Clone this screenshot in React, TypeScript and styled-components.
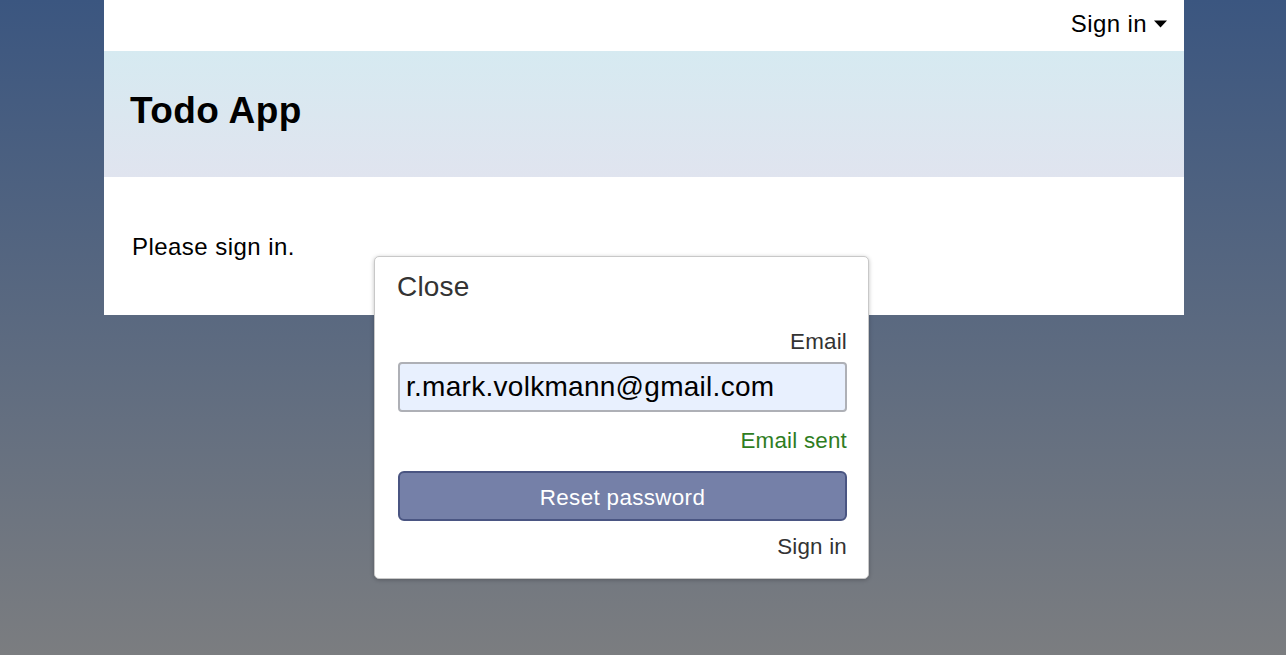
import React from "react";
import styled, { createGlobalStyle } from "styled-components";

const Global = createGlobalStyle`
  html, body { margin: 0; padding: 0; }
  body {
    min-height: 655px;
    background: linear-gradient(to bottom, #3b5680 0%, #7b7d80 100%);
    font-family: "Liberation Sans", Arial, sans-serif;
    color: #000;
  }
  * { box-sizing: border-box; }
`;

const Page = styled.div`
  position: relative;
  min-height: 655px;
`;

const Container = styled.div`
  width: 1080px;
  margin: 0 auto;
  background: #fff;
  transform: translateX(1px);
`;

const TopBar = styled.div`
  height: 51px;
  padding: 10px 17px 0 0;
  display: flex;
  justify-content: flex-end;
  align-items: flex-start;
`;

const MenuToggle = styled.div`
  display: flex;
  align-items: center;
  gap: 7px;
  font-size: 24px;
  line-height: 28px;
  letter-spacing: 0.4px;
`;

const Header = styled.header`
  height: 126px;
  padding: 38px 26px 0;
  background: linear-gradient(to bottom, #d6eaf1 0%, #e0e4ef 100%);
`;

const Title = styled.h1`
  margin: 0;
  font-size: 37px;
  line-height: 44px;
  font-weight: bold;
  letter-spacing: 0.4px;
`;

const Content = styled.main`
  padding: 56px 28px 54px;
  font-size: 24px;
  line-height: 28px;
  letter-spacing: 0.45px;
`;

const Dialog = styled.div`
  position: absolute;
  left: 374px;
  top: 256px;
  width: 495px;
  padding: 14px 21px 18px 22px;
  background: #fff;
  border: 1px solid #c8c8c8;
  border-radius: 5px;
  box-shadow: 0 1px 4px rgba(0, 0, 0, 0.25);
  display: flex;
  flex-direction: column;
  color: #333;
`;

const CloseText = styled.div`
  font-size: 28px;
  line-height: 32px;
  letter-spacing: 0.2px;
`;

const RightText = styled.div<{ $mt: number; $color?: string }>`
  margin-top: ${(p) => p.$mt}px;
  text-align: right;
  font-size: 22.4px;
  line-height: 26px;
  letter-spacing: 0.2px;
  color: ${(p) => p.$color ?? "#333"};
`;

const Input = styled.input`
  margin-top: 7px;
  margin-left: 1px;
  width: 449px;
  height: 50px;
  padding: 0 6px;
  font-family: "Liberation Sans", Arial, sans-serif;
  font-size: 28px;
  letter-spacing: 0.28px;
  color: #000;
  background: #e8f0fe;
  border: 2px solid #aeb0b6;
  border-radius: 4px;
  outline: none;
`;

const ResetButton = styled.button`
  margin-top: 17px;
  margin-left: 1px;
  width: 449px;
  height: 50px;
  font-family: "Liberation Sans", Arial, sans-serif;
  font-size: 22.4px;
  letter-spacing: 0.35px;
  color: #fff;
  background: #7580a8;
  border: 2px solid #4a5582;
  border-radius: 6px;
  padding: 3px 0 0;
`;

const Caret = () => (
  <svg width="13" height="8" viewBox="0 0 13 8" aria-hidden="true">
    <polygon points="0,0.5 13,0.5 6.5,7.5" fill="#000" />
  </svg>
);

export default function App() {
  return (
    <>
      <Global />
      <Page>
        <Container>
          <TopBar>
            <MenuToggle>
              Sign in
              <Caret />
            </MenuToggle>
          </TopBar>
          <Header>
            <Title>Todo App</Title>
          </Header>
          <Content>Please sign in.</Content>
        </Container>
        <Dialog>
          <CloseText>Close</CloseText>
          <RightText $mt={26}>Email</RightText>
          <Input readOnly value="r.mark.volkmann@gmail.com" />
          <RightText $mt={16} $color="#2f7d1f">
            Email sent
          </RightText>
          <ResetButton>Reset password</ResetButton>
          <RightText $mt={13}>Sign in</RightText>
        </Dialog>
      </Page>
    </>
  );
}
